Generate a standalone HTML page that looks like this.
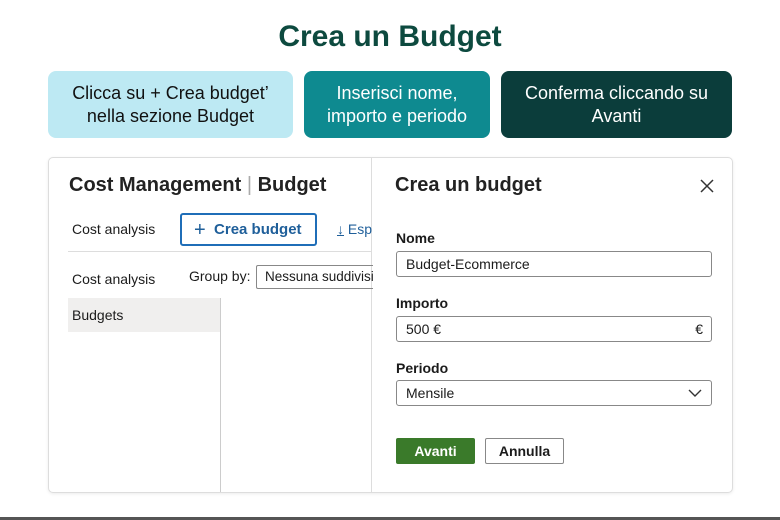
<!DOCTYPE html>
<html><head><meta charset="utf-8"><style>
*{box-sizing:border-box;margin:0;padding:0}
body{width:780px;height:520px;background:#fff;font-family:"Liberation Sans",sans-serif;position:relative;overflow:hidden;color:#1b1b1b}
.a{position:absolute}
h1{position:absolute;top:20px;left:0;width:780px;text-align:center;font-size:30px;color:#0d4a3f;font-weight:bold}
.box{position:absolute;top:71px;height:67px;border-radius:8px;display:flex;align-items:center;justify-content:center;text-align:center;font-size:18px;line-height:23px}
.inp{position:absolute;left:396px;width:316px;height:26px;border:1px solid #888;border-radius:3px;font-size:14px;padding-left:9px;line-height:24px}
.lbl{position:absolute;left:396px;font-size:14px;font-weight:bold}
</style></head><body>
<h1>Crea un Budget</h1>
<div class="box" style="left:48px;width:245px;background:#bde9f3;color:#111">Clicca su + Crea budget’<br>nella sezione Budget</div>
<div class="box" style="left:304px;width:186px;background:#0e8a90;color:#fff">Inserisci nome,<br>importo e periodo</div>
<div class="box" style="left:501px;width:231px;background:#0b3d3b;color:#fff">Conferma cliccando su<br>Avanti</div>

<div class="a" style="left:48px;top:157px;width:685px;height:336px;border:1px solid #ddd;border-radius:5px;box-shadow:0 1px 3px rgba(0,0,0,.08)"></div>
<div class="a" style="left:371px;top:158px;width:1px;height:334px;background:#ddd"></div>
<div class="a" style="left:69px;top:174px;font-size:20px;white-space:nowrap;font-weight:bold;color:#222">Cost Management <span style="color:#aaa;font-weight:normal">|</span> Budget</div>
<div class="a" style="left:72px;top:221px;font-size:14px">Cost analysis</div>
<div class="a" style="left:180px;top:213px;width:137px;height:33px;border:2px solid #1f6eb8;border-radius:3px;color:#1f5f9a;font-size:15px;line-height:29px;padding-left:12px;font-weight:bold"><span style="font-size:20px;font-weight:300;vertical-align:-2px">+</span>&nbsp; Crea budget</div>
<div class="a" style="left:337px;top:221px;font-size:14px;color:#1f5f9a;width:35px;overflow:hidden;white-space:nowrap"><span style="text-decoration:underline">↓</span> Esporta</div>
<div class="a" style="left:68px;top:251px;width:304px;height:1px;background:#ddd"></div>
<div class="a" style="left:72px;top:271px;font-size:14px">Cost analysis</div>
<div class="a" style="left:189px;top:268px;font-size:14px">Group by:</div>
<div class="a" style="left:256px;top:265px;width:117px;height:24px;border:1px solid #888;border-right:none;border-radius:2px 0 0 2px;font-size:13.5px;padding-left:8px;line-height:22px;white-space:nowrap;overflow:hidden">Nessuna suddivisione</div>
<div class="a" style="left:68px;top:298px;width:153px;height:34px;background:#f0efee;font-size:14px;padding-left:4px;line-height:34px">Budgets</div>
<div class="a" style="left:220px;top:298px;width:1px;height:194px;background:#ccc"></div>

<div class="a" style="left:395px;top:174px;font-size:20px;font-weight:bold;color:#222">Crea un budget</div>
<svg class="a" style="left:700px;top:179px" width="14" height="14"><path d="M1 1L13 13M13 1L1 13" stroke="#333" stroke-width="1.5"/></svg>
<div class="lbl" style="top:230px">Nome</div>
<div class="inp" style="top:251px">Budget-Ecommerce</div>
<div class="lbl" style="top:295px">Importo</div>
<div class="inp" style="top:316px">500 €<span style="position:absolute;right:8px">€</span></div>
<div class="lbl" style="top:360px">Periodo</div>
<div class="inp" style="top:380px">Mensile<svg style="position:absolute;right:9px;top:8px" width="14" height="9"><path d="M1 1L7 7L13 1" stroke="#333" stroke-width="1.4" fill="none"/></svg></div>
<div class="a" style="left:396px;top:438px;width:79px;height:26px;background:#3a7a2a;border-radius:2px;color:#fff;font-size:14px;text-align:center;line-height:26px;font-weight:bold">Avanti</div>
<div class="a" style="left:485px;top:438px;width:79px;height:26px;border:1px solid #888;border-radius:2px;font-size:14px;text-align:center;line-height:24px;font-weight:bold">Annulla</div>
<div class="a" style="left:0;top:517px;width:780px;height:3px;background:#555"></div>
</body></html>
